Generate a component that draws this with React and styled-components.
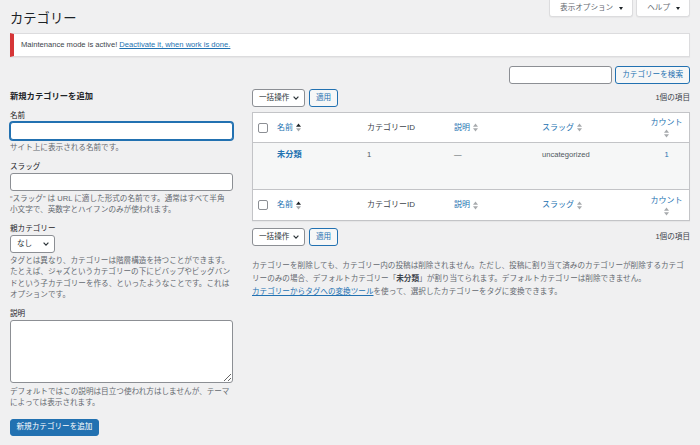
import React from 'react';
import styled, { createGlobalStyle } from 'styled-components';

const GlobalStyle = createGlobalStyle`
  html, body { margin: 0; padding: 0; }
  body {
    background: #f0f0f1;
    color: #3c434a;
    font-family: "Liberation Sans", "Noto Sans CJK JP", sans-serif;
    font-size: 7.6px;
    line-height: 1.5;
  }
  * { box-sizing: border-box; }
`;

const Page = styled.div`
  width: 700px;
  height: 445px;
  padding: 0 10px;
  overflow: hidden;
`;

const Header = styled.div`
  display: flex;
  justify-content: space-between;
  align-items: flex-start;
`;

const Title = styled.h1`
  margin: 0;
  padding-top: 9px;
  font-size: 13.3px;
  font-weight: 400;
  line-height: 20px;
  color: #1d2327;
`;

const MetaLinks = styled.div`
  display: flex;
  gap: 3px;
`;

const MetaTab = styled.div`
  height: 17px;
  padding: 0 9px 0 10px;
  display: flex;
  align-items: center;
  gap: 6px;
  background: #fff;
  border: 1px solid #dcdcde;
  border-top: none;
  border-radius: 0 0 3px 3px;
  color: #646970;
  box-shadow: 0 1px 1px rgba(0, 0, 0, 0.04);
`;

const Notice = styled.div`
  margin-top: 4px;
  height: 24px;
  padding: 0 7px;
  display: flex;
  align-items: center;
  background: #fff;
  border: 1px solid #dcdcde;
  border-left: 4px solid #d63638;
  box-shadow: 0 1px 1px rgba(0, 0, 0, 0.04);
  color: #3c434a;
`;

const Link = styled.a`
  color: #2271b1;
  text-decoration: underline;
  cursor: pointer;
`;

const SearchRow = styled.div`
  margin-top: 9px;
  display: flex;
  justify-content: flex-end;
  gap: 3px;
`;

const TextInput = styled.div`
  width: ${p => p.$w}px;
  height: 18px;
  background: #fff;
  border: 1px solid ${p => (p.$focus ? '#2271b1' : '#8c8f94')};
  border-radius: 3px;
  box-shadow: ${p => (p.$focus ? '0 0 0 1px #2271b1' : 'none')};
`;

const TextArea = styled.textarea`
  display: block;
  width: 223px;
  height: 63px;
  margin: 0;
  padding: 2px 4px;
  background: #fff;
  border: 1px solid #8c8f94;
  border-radius: 3px;
  font: inherit;
  outline: none;
`;

const SecondaryButton = styled.div`
  height: 18px;
  padding: 0 6px;
  display: flex;
  align-items: center;
  background: #f6f7f7;
  border: 1px solid #2271b1;
  border-radius: 3px;
  color: #2271b1;
  white-space: nowrap;
`;

const PrimaryButton = styled.div`
  width: 89px;
  height: 17px;
  display: flex;
  align-items: center;
  justify-content: center;
  background: #2271b1;
  border: 1px solid #2271b1;
  border-radius: 3px;
  color: #fff;
`;

const Select = styled.div`
  width: ${p => p.$w}px;
  height: 18px;
  padding: 0 5px 0 6px;
  display: flex;
  align-items: center;
  justify-content: space-between;
  background: #fff;
  border: 1px solid #8c8f94;
  border-radius: 3px;
  color: #2c3338;
`;

const Columns = styled.div`
  margin-top: 5px;
  display: grid;
  grid-template-columns: 242px 1fr;
`;

const LeftCol = styled.div`
  display: flex;
  flex-direction: column;
`;

const FormTitle = styled.h2`
  margin: 1px 0 0;
  font-size: 8.3px;
  font-weight: 700;
  line-height: 12px;
  color: #1d2327;
`;

const Field = styled.div`
  margin-top: ${p => p.$first ? 8 : 7}px;
  width: 223px;
`;

const Label = styled.div`
  line-height: 11px;
  margin-bottom: 1px;
  color: #1d2327;
`;

const Help = styled.p`
  margin: ${p => p.$mt || 2}px 0 0;
  line-height: 11.5px;
  color: #646970;
`;

const Submit = styled.div`
  margin-top: 10px;
`;

const RightCol = styled.div`
  display: flex;
  flex-direction: column;
`;

const TableNav = styled.div`
  margin-top: ${p => p.$mt || 0}px;
  height: 18px;
  display: flex;
  align-items: center;
  gap: 4px;
`;

const ItemCount = styled.span`
  margin-left: auto;
  color: #3c434a;
`;

const Table = styled.div`
  margin-top: 5px;
  background: #fff;
  border: 1px solid #c3c4c7;
  box-shadow: 0 1px 1px rgba(0, 0, 0, 0.04);
`;

const Row = styled.div`
  display: grid;
  grid-template-columns: 18px 90px 87px 88px 1fr 45px;
  align-items: ${p => (p.$body ? 'start' : 'center')};
  height: ${p => p.$h}px;
  background: ${p => (p.$body ? '#f6f7f7' : '#fff')};
  border-bottom: ${p => (p.$head ? '1px solid #c3c4c7' : 'none')};
  border-top: ${p => (p.$foot ? '1px solid #c3c4c7' : 'none')};
  padding-top: ${p => (p.$body ? 6 : 0)}px;
  font-size: ${p => (p.$body ? 7.6 : 8)}px;
  line-height: 12px;
`;

const Cell = styled.div`
  padding-left: ${p => (p.$center ? 0 : 6)}px;
  display: flex;
  flex-direction: ${p => (p.$center ? 'column' : 'row')};
  align-items: center;
  justify-content: ${p => (p.$center ? 'center' : 'flex-start')};
  gap: ${p => (p.$center ? 0 : 3)}px;
  color: ${p => (p.$link ? '#2271b1' : p.$muted ? '#50575e' : '#3c434a')};
  font-weight: ${p => (p.$bold ? 700 : 400)};
  font-size: ${p => (p.$bold ? '8.2px' : 'inherit')};
  white-space: nowrap;
`;

const CheckCell = styled.div`
  padding-left: 5px;
  display: flex;
  align-items: center;
`;

const Checkbox = styled.div`
  width: 10px;
  height: 10px;
  background: #fff;
  border: 1px solid #8c8f94;
  border-radius: 2px;
`;

const Notes = styled.div`
  margin-top: 14px;
  color: #646970;
  line-height: 12.5px;
`;

const NoteP = styled.p`
  margin: ${p => p.$mt || 0}px 0 0;
`;

const Strong = styled.b`
  color: #3c434a;
  font-weight: 700;
`;

const Chevron = () => (
  <svg width="6" height="4" viewBox="0 0 6 4">
    <path d="M0.6 0.7L3 3.1L5.4 0.7" fill="none" stroke="#2c3338" strokeWidth="1.2" />
  </svg>
);

const Caret = () => (
  <svg width="4" height="3" viewBox="0 0 4 3">
    <path d="M0 0H4L2 3z" fill="#1d2327" />
  </svg>
);

const SortArrows = ({ active }) => (
  <svg width="5" height="9" viewBox="0 0 5 9">
    <path d="M2.5 0.5L5 3.7H0z" fill={active ? '#1d2327' : '#a7aaad'} />
    <path d="M0 5.3H5L2.5 8.5z" fill="#a7aaad" />
  </svg>
);

const HeaderRow = ({ foot }) => (
  <Row $h={foot ? 31 : 30} $head={!foot} $foot={foot}>
    <CheckCell><Checkbox /></CheckCell>
    <Cell $link>名前<SortArrows active /></Cell>
    <Cell>カテゴリーID</Cell>
    <Cell $link>説明<SortArrows /></Cell>
    <Cell $link>スラッグ<SortArrows /></Cell>
    <Cell $link $center>カウント<SortArrows /></Cell>
  </Row>
);

const BulkActions = ({ mt }) => (
  <TableNav $mt={mt}>
    <Select $w={53}>一括操作<Chevron /></Select>
    <SecondaryButton>適用</SecondaryButton>
    <ItemCount>1個の項目</ItemCount>
  </TableNav>
);

const App = () => (
  <Page>
    <GlobalStyle />
    <Header>
      <Title>カテゴリー</Title>
      <MetaLinks>
        <MetaTab>表示オプション<Caret /></MetaTab>
        <MetaTab>ヘルプ<Caret /></MetaTab>
      </MetaLinks>
    </Header>
    <Notice>
      Maintenance mode is active!&nbsp;<Link>Deactivate it, when work is done.</Link>
    </Notice>
    <SearchRow>
      <TextInput $w={103} />
      <SecondaryButton>カテゴリーを検索</SecondaryButton>
    </SearchRow>
    <Columns>
      <LeftCol>
        <FormTitle>新規カテゴリーを追加</FormTitle>
        <Field $first>
          <Label>名前</Label>
          <TextInput $w={223} $focus />
          <Help>サイト上に表示される名前です。</Help>
        </Field>
        <Field>
          <Label>スラッグ</Label>
          <TextInput $w={223} />
          <Help>“スラッグ” は URL に適した形式の名前です。通常はすべて半角<br />小文字で、英数字とハイフンのみが使われます。</Help>
        </Field>
        <Field>
          <Label>親カテゴリー</Label>
          <Select $w={45}>なし<Chevron /></Select>
          <Help>タグとは異なり、カテゴリーは階層構造を持つことができます。たとえば、ジャズというカテゴリーの下にビバップやビッグバンドという子カテゴリーを作る、といったようなことです。これはオプションです。</Help>
        </Field>
        <Field>
          <Label>説明</Label>
          <TextArea />
          <Help $mt={3}>デフォルトではこの説明は目立つ使われ方はしませんが、テーマによっては表示されます。</Help>
        </Field>
        <Submit>
          <PrimaryButton>新規カテゴリーを追加</PrimaryButton>
        </Submit>
      </LeftCol>
      <RightCol>
        <BulkActions />
        <Table>
          <HeaderRow />
          <Row $h={46} $body>
            <div />
            <Cell $link $bold>未分類</Cell>
            <Cell $muted>1</Cell>
            <Cell $muted>—</Cell>
            <Cell $muted>uncategorized</Cell>
            <Cell $link $center>1</Cell>
          </Row>
          <HeaderRow foot />
        </Table>
        <BulkActions mt={7} />
        <Notes>
          <NoteP>
            <span>カテゴリーを削除しても、カテゴリー内の投稿は削除されません。ただし、投稿に割り当て済みのカテゴリーが削除するカテゴ</span>
            <br />
            <span>リーのみの場合、デフォルトカテゴリー「<Strong>未分類</Strong>」が割り当てられます。デフォルトカテゴリーは削除できません。</span>
          </NoteP>
          <NoteP $mt={1}><Link>カテゴリーからタグへの変換ツール</Link>を使って、選択したカテゴリーをタグに変換できます。</NoteP>
        </Notes>
      </RightCol>
    </Columns>
  </Page>
);

export default App;
